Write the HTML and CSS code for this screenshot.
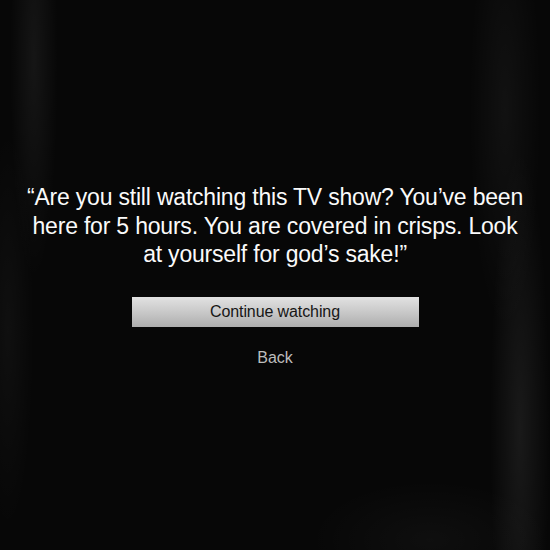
FILE: index.html
```html
<!DOCTYPE html>
<html lang="en">
<head>
<meta charset="utf-8">
<title>Are you still watching?</title>
<link rel="stylesheet" href="styles.css">
</head>
<body>
<main class="prompt">
  <p class="prompt-question">“Are you still watching this TV show? You’ve been here for 5 hours. You are covered in crisps. Look at yourself for god’s sake!”</p>
  <button class="prompt-continue" type="button">Continue watching</button>
  <a class="prompt-back" href="#">Back</a>
</main>
</body>
</html>
```

FILE: styles.css
```css
html, body {
  margin: 0;
  height: 100%;
}

body {
  /* dark fabric with soft folds along the edges */
  background:
    radial-gradient(ellipse 24px 220px at 34px 60px, rgba(255,255,255,0.06), transparent),
    radial-gradient(ellipse 26px 200px at 8px 330px, rgba(255,255,255,0.035), transparent),
    radial-gradient(ellipse 30px 280px at 520px 430px, rgba(255,255,255,0.075), transparent),
    radial-gradient(ellipse 36px 220px at 505px 110px, rgba(255,255,255,0.045), transparent),
    radial-gradient(ellipse 120px 60px at 430px 540px, rgba(255,255,255,0.03), transparent),
    #070707;
  font-family: "Liberation Sans", Arial, Helvetica, sans-serif;
  color: #fff;
}

.prompt {
  display: flex;
  flex-direction: column;
  align-items: center;
  padding-top: 183px;
}

.prompt-question {
  margin: 0;
  width: 500px;
  font-size: 23px;
  line-height: 28.5px;
  letter-spacing: -0.2px;
  text-align: center;
  color: #fafafa;
}

.prompt-continue {
  margin-top: 28px;
  width: 287px;
  height: 30px;
  padding: 0;
  border: 0;
  background: linear-gradient(#e2e2e2, #c6c6c6 55%, #adadad);
  font-family: inherit;
  font-size: 16px;
  line-height: 30px;
  color: #161616;
  letter-spacing: -0.1px;
}

.prompt-back {
  margin-top: 21px;
  font-size: 16px;
  line-height: 20px;
  color: #bdbdbd;
  text-decoration: none;
}
```
